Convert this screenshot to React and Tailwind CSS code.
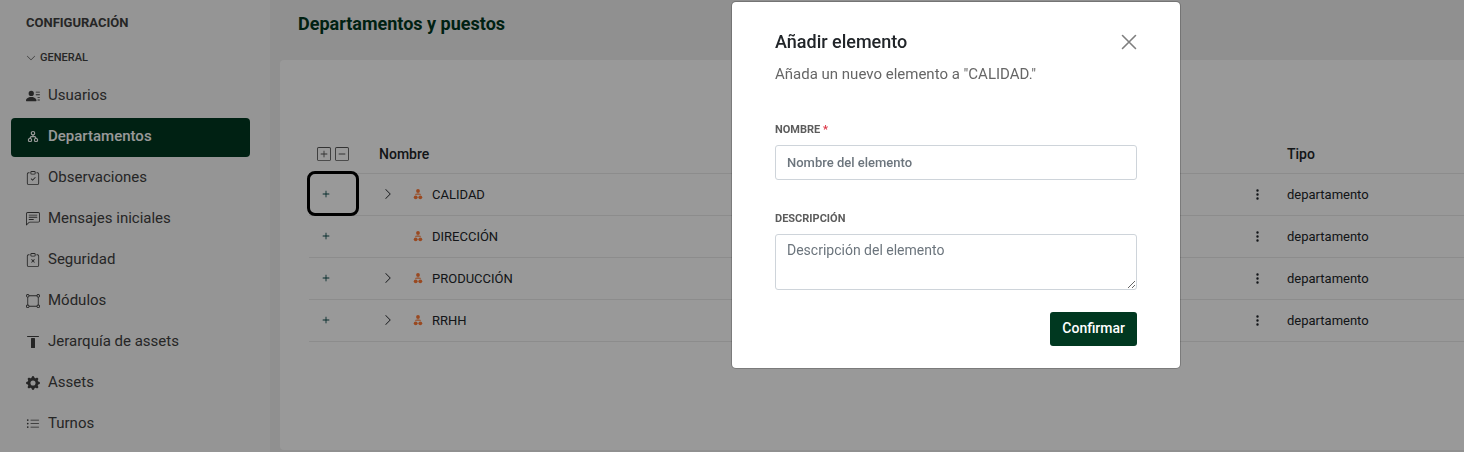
import React from "react";
import {
  BsPersonLinesFill,
  BsClipboardCheck,
  BsChatLeftText,
  BsClipboardX,
  BsBoundingBoxCircles,
  BsGearFill,
  BsListUl,
  BsChevronDown,
  BsChevronRight,
  BsPlus,
  BsPlusSquare,
  BsDashSquare,
  BsThreeDotsVertical,
} from "react-icons/bs";

function OrgOutline() {
  return (
    <svg viewBox="0 0 14 14" className="size-[14px]" fill="none" stroke="currentColor" strokeWidth="1.2" aria-hidden="true">
      <circle cx="7" cy="3.2" r="1.7" />
      <path d="M7 4.8v1.7M3.9 8.4L5 6.6h4l1.1 1.8" />
      <rect x="2.5" y="8.5" width="3" height="3" rx="1" />
      <rect x="8.5" y="8.5" width="3" height="3" rx="1" />
    </svg>
  );
}

function OrgSolid() {
  return (
    <svg viewBox="0 0 10 12" className="h-[12px] w-[10px] text-[#ff7a38]" fill="currentColor" aria-hidden="true">
      <circle cx="5" cy="2.9" r="1.9" />
      <path d="M4.5 4h1v1.6h1.7l1 1.4H1.8l1-1.4h1.7z" opacity=".7" />
      <circle cx="2.7" cy="9.3" r="1.9" />
      <circle cx="7.3" cy="9.3" r="1.9" />
    </svg>
  );
}

function TopBar() {
  return (
    <svg viewBox="0 0 14 14" className="size-[14px]" fill="currentColor" aria-hidden="true">
      <rect x="1" y="1" width="12" height="1" rx=".5" />
      <rect x="5" y="3" width="4" height="10" rx=".5" />
    </svg>
  );
}

const navItems = [
  { label: "Usuarios", Icon: BsPersonLinesFill },
  { label: "Departamentos", Icon: OrgOutline, active: true },
  { label: "Observaciones", Icon: BsClipboardCheck },
  { label: "Mensajes iniciales", Icon: BsChatLeftText },
  { label: "Seguridad", Icon: BsClipboardX },
  { label: "Módulos", Icon: BsBoundingBoxCircles },
  { label: "Jerarquía de assets", Icon: TopBar },
  { label: "Assets", Icon: BsGearFill },
  { label: "Turnos", Icon: BsListUl },
];

const rows = [
  { name: "CALIDAD", expandable: true, highlighted: true },
  { name: "DIRECCIÓN" },
  { name: "PRODUCCIÓN", expandable: true },
  { name: "RRHH", expandable: true },
];

function Sidebar() {
  return (
    <aside className="w-[270px] shrink-0 bg-[#f8f8f8] pl-[11px] pr-5 pt-[13px] text-[#404040]">
      <h2 className="pl-[15px] text-[13px] font-bold leading-5">CONFIGURACIÓN</h2>
      <button type="button" className="mt-4 flex items-center gap-1 pl-[15px] text-[11px] font-medium leading-[18px]">
        <BsChevronDown className="size-[10px]" />
        GENERAL
      </button>
      <nav className="mt-[10px] flex flex-col gap-[2px]">
        {navItems.map(({ label, Icon, active }) => (
          <a
            key={label}
            href="#"
            className={
              active
                ? "flex h-[39px] items-center gap-2 rounded bg-[#003820] pb-[2px] pl-[15px] text-[15px] font-medium text-white"
                : "flex h-[39px] items-center gap-2 rounded pb-[2px] pl-[15px] text-[15px]"
            }
          >
            <Icon className="size-[14px]" />
            {label}
          </a>
        ))}
      </nav>
    </aside>
  );
}

function DepartmentTable() {
  return (
    <table className="w-full table-fixed border-collapse text-left text-[13px] text-[#212529]">
      <colgroup>
        <col className="w-[62px]" />
        <col />
        <col className="w-[42px]" />
        <col className="w-[185px]" />
      </colgroup>
      <thead>
        <tr className="h-[40px] border-b border-[#e9e9e9] text-[14px]">
          <th className="pl-2 pt-[2px]">
            <span className="flex items-center gap-1 text-[#555]">
              <button type="button" aria-label="Expandir todo">
                <BsPlusSquare className="block size-[14px]" />
              </button>
              <button type="button" aria-label="Contraer todo">
                <BsDashSquare className="block size-[14px]" />
              </button>
            </span>
          </th>
          <th className="pl-2 pt-[3px] font-medium">Nombre</th>
          <th />
          <th className="pl-2 pt-[3px] font-medium">Tipo</th>
        </tr>
      </thead>
      <tbody>
        {rows.map(({ name, expandable, highlighted }) => (
          <tr key={name} className="h-[42px] border-b border-[#e9e9e9]">
            <td className="relative pl-[10px]">
              <button type="button" aria-label={"Añadir a " + name} className="block text-[#0a4a4a]">
                <BsPlus className="size-[14px]" />
              </button>
              {highlighted && (
                <span className="pointer-events-none absolute -left-[2px] -top-[3px] h-[45px] w-[52px] rounded-lg border-3 border-black" />
              )}
            </td>
            <td className="pl-[11px]">
              <span className="flex items-center">
                <span className="flex w-[31px]">
                  {expandable && (
                    <button type="button" aria-label={"Expandir " + name}>
                      <BsChevronRight className="block size-3" />
                    </button>
                  )}
                </span>
                <OrgSolid />
                <span className="pl-[9px] pt-[2px]">{name}</span>
              </span>
            </td>
            <td>
              <button type="button" aria-label={"Opciones de " + name} className="block pl-[14px]">
                <BsThreeDotsVertical className="size-[13px]" />
              </button>
            </td>
            <td className="pl-2 pt-[2px]">departamento</td>
          </tr>
        ))}
      </tbody>
    </table>
  );
}

function AddDialog() {
  return (
    <div
      role="dialog"
      aria-modal="true"
      aria-labelledby="dialog-title"
      className="w-[450px] rounded-[5px] border border-black/20 bg-white bg-clip-padding px-[43px] pb-[22px] pt-7"
    >
      <div className="flex items-center justify-between">
        <h2 id="dialog-title" className="text-[18px] font-medium leading-6 text-[#212529]">
          Añadir elemento
        </h2>
        <button type="button" aria-label="Cerrar" className="text-[#7f7f7f]">
          <svg viewBox="0 0 16 16" className="block size-4" stroke="currentColor" strokeWidth="1.6" strokeLinecap="round">
            <path d="M1.5 1.5l13 13M14.5 1.5l-13 13" />
          </svg>
        </button>
      </div>
      <p className="mt-[10px] text-[15px] leading-5 text-[#666]">Añada un nuevo elemento a "CALIDAD."</p>
      <form className="mt-[38px] flex flex-col">
        <label htmlFor="nombre" className="text-[11px] font-bold leading-4 text-[#5c5c5c]">
          NOMBRE <span className="text-[#dc3545]">*</span>
        </label>
        <input
          id="nombre"
          placeholder="Nombre del elemento"
          className="mt-[7px] h-[35px] rounded-[3px] border border-[#ced4da] px-[11px] text-[13px] font-medium placeholder:text-[#6c757d]"
        />
        <label htmlFor="descripcion" className="mt-[31px] text-[11px] font-bold leading-4 text-[#5c5c5c]">
          DESCRIPCIÓN
        </label>
        <textarea
          id="descripcion"
          placeholder="Descripción del elemento"
          className="mt-[7px] h-[56px] rounded-[3px] border border-[#ced4da] px-[11px] py-[5px] text-[14px] leading-5 placeholder:text-[#6c757d]"
        />
        <button
          type="button"
          className="mt-[22px] h-[34px] self-end rounded-[3px] bg-[#003820] px-3 pb-px text-[14px] font-medium text-white"
        >
          Confirmar
        </button>
      </form>
    </div>
  );
}

export default function App() {
  return (
    <div className="relative flex min-h-screen overflow-hidden bg-[#f0f0f0] font-['Roboto','Liberation_Sans',sans-serif]">
      <Sidebar />
      <main className="flex min-w-0 grow flex-col pl-[10px]">
        <h1 className="pb-6 pl-[18px] pt-3 text-[18px] font-bold leading-6 text-[#003820]">Departamentos y puestos</h1>
        <section className="mb-[2px] grow rounded-l bg-white pl-[29px] pt-[73px]">
          <DepartmentTable />
        </section>
      </main>
      <div className="fixed inset-0 flex items-start justify-end bg-black/40 pr-[283px] pt-px">
        <AddDialog />
      </div>
    </div>
  );
}
